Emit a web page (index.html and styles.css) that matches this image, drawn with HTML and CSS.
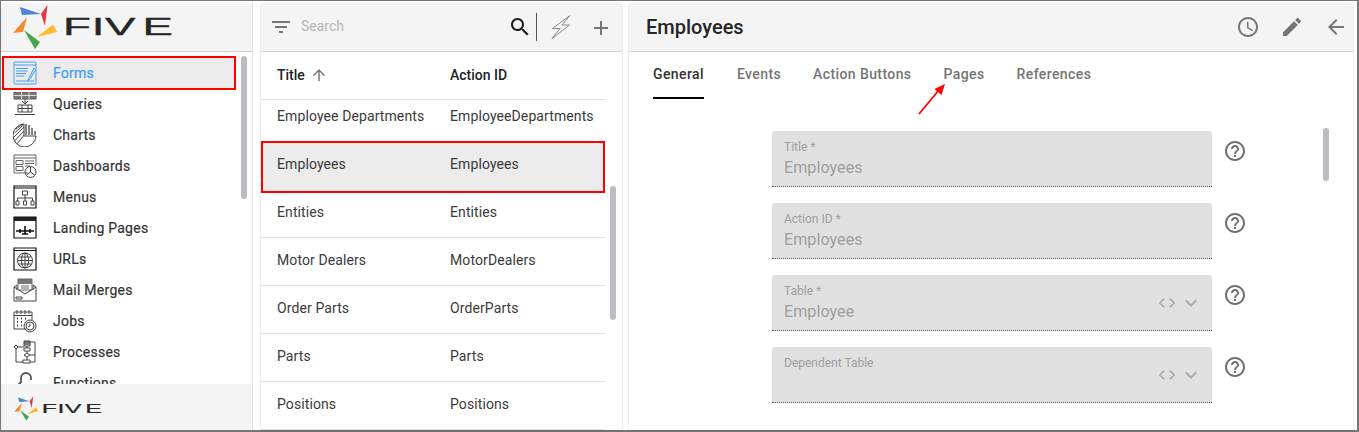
FILE: index.html
```html
<!DOCTYPE html>
<html lang="en">
<head>
<meta charset="utf-8">
<title>Five - Employees</title>
<link rel="stylesheet" href="styles.css">
</head>
<body>
<svg class="sprite" aria-hidden="true">
  <defs>
    <symbol id="logo" viewBox="0 0 180 52">
      <polygon fill="#4a86d8" points="20,6 41,13 22,14"/>
      <polygon fill="#e5383b" points="47.5,4 41,13 45,25"/>
      <polygon fill="#f58a2c" points="27,16 13,32 23,31"/>
      <polygon fill="#fdbb2d" points="53,23.5 57,31 37,36"/>
      <polygon fill="#47a44b" points="24,29 40,41 35,48"/>
      <text class="logo-word" transform="translate(63 34) scale(1.9 1)" x="0 15.2 22.1 41.8" y="0">FIVE</text>
    </symbol>
    <symbol id="help" viewBox="0 0 24 24"><path d="M11 18h2v-2h-2v2zm1-16C6.48 2 2 6.48 2 12s4.48 10 10 10 10-4.48 10-10S17.52 2 12 2zm0 18c-4.41 0-8-3.59-8-8s3.59-8 8-8 8 3.59 8 8-3.59 8-8 8zm0-14c-2.21 0-4 1.79-4 4h2c0-1.1.9-2 2-2s2 .9 2 2c0 2-3 1.75-3 5h2c0-2.25 3-2.5 3-5 0-2.21-1.79-4-4-4z"/></symbol>
    <symbol id="code" viewBox="0 0 24 24"><path d="M9.4 16.6L4.8 12l4.6-4.6L8 6l-6 6 6 6 1.4-1.4zm5.2 0l4.6-4.6-4.6-4.6L16 6l6 6-6 6-1.4-1.4z"/></symbol>
    <symbol id="chev" viewBox="0 0 24 24"><path d="M16.59 8.59L12 13.17 7.41 8.59 6 10l6 6 6-6z"/></symbol>
  </defs>
</svg>

<div class="app">
  <aside class="sidebar">
    <div class="brand"><svg class="logo-main"><use href="#logo"/></svg></div>
    <div class="nav-wrap">
      <nav class="nav">
        <a class="nav-item is-active">
          <svg class="nav-icon forms" viewBox="0 0 24 24"><rect x="1" y="1" width="22" height="22" rx="1"/><path d="M1 4h22M3 7.500h12M3 10h12M3 12.500h10M3 15h8M3 20h18"/><path class="fat" d="M21 7l-5 10-1.500 3 3-2.500 5-9z"/></svg>
          <span>Forms</span>
        </a>
        <a class="nav-item">
          <svg class="nav-icon" viewBox="0 0 24 24"><path class="chunk" d="M1 0h22v7H1z"/><path class="light" d="M1 3.500h22M8.500 0v7M16 0v7"/><path d="M12 7v5M9 9l3 3 3-3"/><path d="M5 13h14v7H5zM2 22.500h20M5 16.500h14M9 13v7M15 13v7"/></svg>
          <span>Queries</span>
        </a>
        <a class="nav-item">
          <svg class="nav-icon" viewBox="0 0 24 24"><path d="M11 1a11.500 11.500 0 1 0 12 12H11z"/><path d="M3 6l7-5M1.500 10l9-8M1 14l10-10M1.500 18l9.500-10M4 21l7-9"/><path class="bars" d="M13 12V1M16 12V2M19 12V5M22 12V8"/></svg>
          <span>Charts</span>
        </a>
        <a class="nav-item">
          <svg class="nav-icon" viewBox="0 0 24 24"><path class="dim" d="M15 19H1V1h22v11M1 4h22M3 6.500h7v4H3zM3 12.500h7v4H3zM12 7h9M12 9.500h9M12 12h5"/><circle cx="17.500" cy="18" r="5.500"/><path d="M17.500 18v-5M17.500 18l-4 3M17.500 18l4 3"/></svg>
          <span>Dashboards</span>
        </a>
        <a class="nav-item">
          <svg class="nav-icon" viewBox="0 0 24 24"><path class="dark" d="M1 1h22v22H1zM1 3h22"/><path d="M9.500 6h5v4h-5zM12 10v3M4.500 13h15v3M4.500 13v3M12 13v3M3 16h3v4H3zM10.500 16h3v4h-3zM18 16h3v4h-3z"/></svg>
          <span>Menus</span>
        </a>
        <a class="nav-item">
          <svg class="nav-icon" viewBox="0 0 24 24"><path class="solid" d="M1 1h22v4H1z"/><path class="dark" d="M1 1h22v21H1z"/><path class="thick" d="M3 15h18M12 10v8M9 18h6M7 13v4M17 13v4"/></svg>
          <span>Landing Pages</span>
        </a>
        <a class="nav-item">
          <svg class="nav-icon" viewBox="0 0 24 24"><path class="dark" d="M1 1h22v22H1zM1 3.500h22"/><circle cx="12" cy="13.500" r="7.500"/><ellipse cx="12" cy="13.500" rx="3.500" ry="7.500"/><path d="M4.500 13.500h15M5.500 10h13M5.500 17h13M12 6v15"/></svg>
          <span>URLs</span>
        </a>
        <a class="nav-item">
          <svg class="nav-icon" viewBox="0 0 24 24"><path d="M1 9l3-2v5M23 9l-3-2v5M1 9v14h22V9l-11 7zM3 19h6v2H3z"/><path class="solid-dim" d="M5 1h14v5H5z"/><path class="dim" d="M5 1h14v11H5zM8 8h8M8 10h8"/></svg>
          <span>Mail Merges</span>
        </a>
        <a class="nav-item">
          <svg class="nav-icon" viewBox="0 0 24 24"><path d="M13 20H1V3h18v8M1 6.500h18M4 1v4M8 1v4M12 1v4M16 1v4"/><path class="dots" d="M4 9.500h1M8 9.500h1M12 9.500h1M4 13h1M8 13h1M4 16.500h1M8 16.500h1"/><circle cx="17" cy="17" r="6"/><circle cx="17" cy="17" r="4"/><path d="M17 14.500V17l-2 1"/></svg>
          <span>Jobs</span>
        </a>
        <a class="nav-item">
          <svg class="nav-icon" viewBox="0 0 24 24"><path class="solid-dim" d="M11 1h6v4h-6z"/><path d="M11 1h6v5h-6zM14 6v2M11 8h6v3h-6zM14 11v2M14 13l3 2-3 2-3-2zM14 17v3M10 20h7v3h-7zM1 7l2-2 2 2-2 2zM5 7h6M3 9v13h7M17 2h5v20h-5M17 15h5"/></svg>
          <span>Processes</span>
        </a>
        <a class="nav-item">
          <svg class="nav-icon" viewBox="0 0 24 24"><path class="thick-dim" d="M8 12V7a5 5 0 0 1 10 0v2M8 12c-3 0-3 4 0 4h2M14 16h4"/></svg>
          <span>Functions</span>
        </a>
      </nav>
      <div class="scrollbar nav-thumb"></div>
    </div>
    <div class="side-foot"><svg class="logo-small"><use href="#logo"/></svg></div>
  </aside>

  <section class="panel list-panel">
    <header class="bar list-bar">
      <svg class="ico filter" viewBox="0 0 24 24"><path d="M10 18h4v-2h-4v2zM3 6v2h18V6H3zm3 7h12v-2H6v2z"/></svg>
      <span class="search-text">Search</span>
      <svg class="ico search" viewBox="0 0 24 24"><path d="M15.500 14h-.79l-.28-.27C15.410 12.590 16 11.110 16 9.500 16 5.910 13.090 3 9.500 3S3 5.910 3 9.500 5.910 16 9.500 16c1.610 0 3.090-.59 4.230-1.570l.27.28v.79l5 4.990L20.490 19l-4.990-5zm-6 0C7.010 14 5 11.990 5 9.500S7.010 5 9.500 5 14 7.010 14 9.500 11.990 14 9.500 14z"/></svg>
      <span class="vr"></span>
      <svg class="ico bolt" viewBox="0 0 24 24"><path d="M21 .5L3.500 13.500h7.500L3 23.500 20.500 10H13z"/></svg>
      <svg class="ico add" viewBox="0 0 24 24"><path d="M19 13h-6v6h-2v-6H5v-2h6V5h2v6h6v2z"/></svg>
    </header>
    <div class="table-wrap">
      <div class="row head">
        <span class="col-a">Title <svg class="sort" viewBox="0 0 24 24"><path d="M4 12l1.410 1.410L11 7.830V20h2V7.830l5.580 5.590L20 12l-8-8-8 8z"/></svg></span>
        <span class="col-b">Action ID</span>
      </div>
      <div class="rows">
        <div class="row item"><span class="col-a">Employee Departments</span><span class="col-b">EmployeeDepartments</span></div>
        <div class="row item is-selected"><span class="col-a">Employees</span><span class="col-b">Employees</span></div>
        <div class="row item"><span class="col-a">Entities</span><span class="col-b">Entities</span></div>
        <div class="row item"><span class="col-a">Motor Dealers</span><span class="col-b">MotorDealers</span></div>
        <div class="row item"><span class="col-a">Order Parts</span><span class="col-b">OrderParts</span></div>
        <div class="row item"><span class="col-a">Parts</span><span class="col-b">Parts</span></div>
        <div class="row item"><span class="col-a">Positions</span><span class="col-b">Positions</span></div>
      </div>
      <div class="scrollbar list-thumb"></div>
    </div>
  </section>

  <section class="panel detail-panel">
    <header class="bar detail-bar">
      <h1>Employees</h1>
      <svg class="ico hdr" viewBox="0 0 24 24"><path d="M11.990 2C6.470 2 2 6.480 2 12s4.470 10 9.990 10C17.520 22 22 17.520 22 12S17.520 2 11.990 2zM12 20c-4.420 0-8-3.580-8-8s3.580-8 8-8 8 3.580 8 8-3.580 8-8 8zm.5-13H11v6l5.250 3.150.75-1.230-4.500-2.670z"/></svg>
      <svg class="ico hdr" viewBox="0 0 24 24"><path d="M3 17.250V21h3.750L17.810 9.940l-3.750-3.750L3 17.250zM20.710 7.040c.39-.39.39-1.020 0-1.410l-2.340-2.340c-.39-.39-1.020-.39-1.410 0l-1.830 1.830 3.750 3.750 1.830-1.830z"/></svg>
      <svg class="ico hdr" viewBox="0 0 24 24"><path d="M20 11H7.830l5.590-5.590L12 4l-8 8 8 8 1.410-1.410L7.830 13H20v-2z"/></svg>
    </header>
    <div class="tabs">
      <span class="tab is-current">General</span>
      <span class="tab">Events</span>
      <span class="tab">Action Buttons</span>
      <span class="tab">Pages</span>
      <span class="tab">References</span>
    </div>
    <svg class="pointer" viewBox="0 0 30 32"><path d="M2 31L22 7" stroke="#f00" stroke-width="1.800" fill="none"/><polygon fill="#f00" points="28,1 24.500,12 17.500,6"/></svg>
    <div class="form-scroll">
      <div class="form">
        <div class="field-row">
          <div class="field"><label>Title *</label><div class="val">Employees</div></div>
          <svg class="help"><use href="#help"/></svg>
        </div>
        <div class="field-row">
          <div class="field"><label>Action ID *</label><div class="val">Employees</div></div>
          <svg class="help"><use href="#help"/></svg>
        </div>
        <div class="field-row">
          <div class="field"><label>Table *</label><div class="val">Employee</div>
            <div class="adorn"><svg class="a-code"><use href="#code"/></svg><svg class="a-chev"><use href="#chev"/></svg></div></div>
          <svg class="help"><use href="#help"/></svg>
        </div>
        <div class="field-row">
          <div class="field"><label>Dependent Table</label><div class="val"></div>
            <div class="adorn"><svg class="a-code"><use href="#code"/></svg><svg class="a-chev"><use href="#chev"/></svg></div></div>
          <svg class="help"><use href="#help"/></svg>
        </div>
      </div>
      <div class="scrollbar form-thumb"></div>
    </div>
  </section>
</div>
</body>
</html>
```

FILE: styles.css
```css
* { box-sizing: border-box; }
html, body { margin: 0; height: 100%; }
body {
  font-family: Roboto, "Liberation Sans", sans-serif;
  font-size: 14px;
  color: #212121;
  background: #fff;
  overflow: hidden;
}
.sprite { position: absolute; width: 0; height: 0; }

.app {
  height: 432px;
  display: flex;
  border-top: 1px solid #777;
  border-left: 1px solid #777;
  border-right: 2px solid #777;
  border-bottom: 2px solid #777;
  background: #fff;
}

/* Sidebar */
.sidebar {
  width: 252px;
  flex: none;
  display: flex;
  flex-direction: column;
  border-right: 1px solid #e2e2e2;
}
.brand {
  height: 49px;
  flex: none;
  background: #f4f4f4;
  border-bottom: 1px solid #cfcfcf;
  margin-top: 2px;
  border-radius: 4px 4px 0 0;
}
.logo-main { display: block; width: 180px; height: 52px; margin-top: -2px; margin-left: -1px; }
.logo-word {
  font-family: "Liberation Sans", sans-serif;
  font-size: 24px;
  fill: #262626;
  stroke: #262626;
  stroke-width: .35;
}
.nav-wrap { flex: 1; position: relative; overflow: hidden; min-height: 0; }
.nav { padding-top: 6px; width: 233px; display: flex; flex-direction: column; }
.nav-item {
  height: 31px;
  flex: none;
  display: flex;
  align-items: center;
  gap: 16px;
  padding-left: 12px;
  color: #333;
  letter-spacing: .25px;
  -webkit-text-stroke: .2px #333;
}
.nav-item.is-active {
  height: 30px;
  margin-left: 3px;
  padding-left: 9px;
  background: #ebebeb;
  color: #3f9bfc;
  -webkit-text-stroke: .2px #3f9bfc;
  outline: 2px solid #f00;
}
.nav-icon {
  width: 24px;
  height: 24px;
  flex: none;
  fill: none;
  stroke: #444;
  stroke-width: 1;
}
.nav-icon .dim { stroke: #666; }
.nav-icon .chunk { fill: #777; stroke: #555; }
.nav-icon .light { stroke: #ddd; }
.nav-icon .bars { stroke: #666; stroke-width: 1.600; }
.nav-icon .dark { stroke: #111; stroke-width: 1.200; }
.nav-icon .solid { fill: #222; stroke: none; }
.nav-icon .solid-dim { fill: #777; stroke: none; }
.nav-icon .thick { stroke: #111; stroke-width: 1.600; }
.nav-icon .thick-dim { stroke: #555; stroke-width: 1.800; }
.nav-icon .dots { stroke: #444; stroke-width: 2; }
.nav-icon.forms { stroke: #4a9df0; }
.nav-icon.forms .fat { fill: #cfe5fb; }
.side-foot { height: 46px; flex: none; background: #f4f4f4; position: relative; }
.logo-small { display: block; width: 99px; height: 29px; margin: 10px 0 0 6px; }

.scrollbar {
  position: absolute;
  width: 6px;
  border-radius: 3px;
  background: #bcbcc2;
}
.nav-thumb { left: 240px; top: 4px; height: 143px; }

/* Panels */
.panel {
  margin-top: 3px;
  background: #fff;
  box-shadow: 0 0 2px rgba(0,0,0,.28);
  border-radius: 4px 4px 0 0;
  display: flex;
  flex-direction: column;
  position: relative;
  min-width: 0;
}
.list-panel { width: 361px; flex: none; margin-left: 8px; }
.detail-panel { flex: 1; margin-left: 7px; margin-right: 4px; }
.bar {
  height: 48px;
  flex: none;
  background: #f4f4f4;
  border-radius: 4px 4px 0 0;
  border-bottom: 1px solid #d4d4d4;
  display: flex;
  align-items: center;
  padding-bottom: 2px;
}
.ico { width: 24px; height: 24px; flex: none; fill: #757575; }

.list-bar { padding-left: 8px; padding-right: 9px; }
.search-text { margin-left: 8px; margin-bottom: 1px; flex: 1; color: #b5b5b5; }
.search { fill: #1a1a1a; margin-right: 4px; margin-left: 1px; }
.vr { width: 1px; height: 28px; background: #555; margin-right: 12px; }
.bolt { fill: none; stroke: #8a8a8a; stroke-width: 1; margin-right: 16px; }
.add { fill: #757575; margin-top: 2px; }

.table-wrap { flex: 1; position: relative; overflow: hidden; min-height: 0; }
.row { display: flex; align-items: center; padding-left: 16px; width: 344px; }
.col-a { width: 173px; flex: none; display: flex; align-items: center; gap: 2px; white-space: pre; }
.col-b { flex: none; white-space: nowrap; }
.head {
  height: 48px;
  padding-bottom: 2px;
  font-weight: 500;
  color: #222;
  border-bottom: 1px solid #e0e0e0;
  position: relative;
  z-index: 1;
  background: #fff;
}
.sort { width: 18px; height: 18px; fill: #757575; }
.rows { margin-top: -6px; }
.item {
  height: 48px;
  padding-bottom: 3px;
  border-bottom: 1px solid #e0e0e0;
  color: #3a3a3a;
  letter-spacing: .1px;
  position: relative;
}
.item:first-child { border-bottom: 0; padding-bottom: 4px; }
.item.is-selected { border-bottom: 0; padding-bottom: 4px; z-index: 0; }
.item.is-selected::after {
  content: "";
  position: absolute;
  z-index: -1;
  left: 0;
  right: 0;
  top: -1px;
  height: 48px;
  background: #ebebeb;
  border: 2px solid #f00;
}
.list-thumb { left: 349px; top: 134px; height: 134px; }

/* Detail */
.detail-bar { padding-left: 17px; padding-right: 5px; gap: 20px; }
.detail-bar h1 { margin: 0 auto 0 0; font-size: 20px; font-weight: 500; color: #262626; }
.tabs { display: flex; gap: 32px; padding-left: 24px; height: 47px; flex: none; }
.tab {
  height: 47px;
  display: flex;
  align-items: center;
  padding-bottom: 4px;
  font-weight: 500;
  color: #757575;
  letter-spacing: .4px;
}
.tab.is-current { color: #333; border-bottom: 2px solid #000; padding-bottom: 2px; margin-right: 1px; }
.pointer { position: absolute; left: 288px; top: 79px; width: 30px; height: 32px; }
.form-scroll { flex: 1; position: relative; overflow: hidden; min-height: 0; }
.form { padding: 32px 0 0 143px; display: flex; flex-direction: column; gap: 16px; }
.field-row { display: flex; gap: 11px; }
.field {
  width: 440px;
  height: 56px;
  flex: none;
  background: #e0e0e0;
  border-radius: 4px 4px 0 0;
  border-bottom: 1px dotted #555;
  padding: 9px 12px 0;
  position: relative;
}
.field label { display: block; font-size: 12px; line-height: 14px; color: #9e9e9e; }
.val { font-size: 16px; line-height: 24px; color: #9e9e9e; margin-top: 2px; letter-spacing: .1px; }
.adorn {
  position: absolute;
  right: 9px;
  top: 16px;
  height: 24px;
  display: flex;
  align-items: center;
  gap: 2px;
  fill: #ababab;
}
.a-code { width: 20px; height: 20px; }
.a-chev { width: 24px; height: 24px; }
.help { width: 24px; height: 24px; margin-top: 8px; fill: #6f6f6f; flex: none; }
.form-thumb { left: 694px; top: 29px; height: 53px; }
```
